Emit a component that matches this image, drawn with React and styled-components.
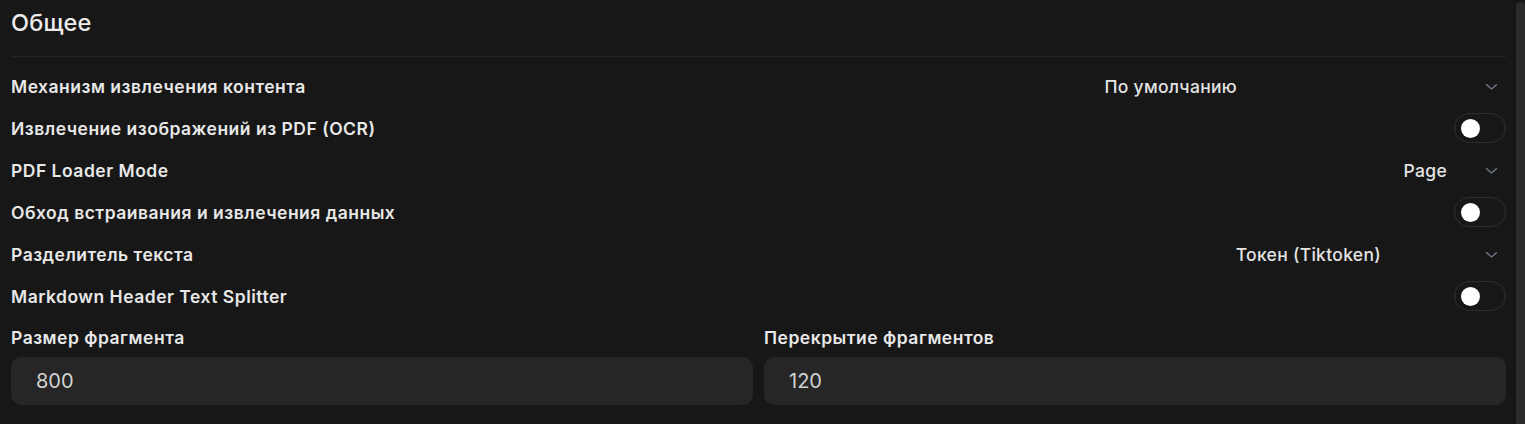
import React from "react";
import styled, { createGlobalStyle } from "styled-components";

const GlobalStyle = createGlobalStyle`
  html, body {
    margin: 0;
    padding: 0;
    background: #171717;
  }
  body {
    font-family: Inter, "Noto Sans", sans-serif;
    color: #e6e6e6;
    -webkit-font-smoothing: antialiased;
  }
`;

const Page = styled.div`
  display: flex;
  height: 424px;
  overflow: hidden;
  background: #171717;
`;

const Content = styled.div`
  flex: 1;
  padding: 0 10px 0 11px;
`;

const Scrollbar = styled.div`
  width: 9px;
  margin-top: 2px;
  background: #2b2b2b;
  border-radius: 5px 5px 0 0;
`;

const Title = styled.h2`
  margin: 0;
  padding-top: 8px;
  height: 30px;
  line-height: 30px;
  font-size: 23.5px;
  font-weight: 500;
  letter-spacing: 0.2px;
  color: #ececec;
`;

const Divider = styled.hr`
  margin: 18px 0 8px;
  border: none;
  border-top: 1px solid #262626;
`;

const Row = styled.div`
  display: flex;
  align-items: center;
  justify-content: space-between;
  height: 42px;
`;

const Label = styled.div`
  font-size: 17.5px;
  font-weight: 600;
  letter-spacing: 0.5px;
  color: #e8e8e8;
`;

const Select = styled.div`
  display: flex;
  align-items: center;
  padding-right: 7px;
  color: #e3e3e3;
  font-size: 17.5px;
  font-weight: 500;
  letter-spacing: 0.3px;
`;

const SelectValue = styled.span`
  padding-right: ${(p) => p.$trail}px;
`;

const Chevron = styled.svg`
  width: 15px;
  height: 15px;
  color: #6b7280;
`;

const Toggle = styled.div`
  box-sizing: border-box;
  width: 52px;
  height: 30px;
  border: 1.5px solid #2e2e2e;
  border-radius: 15px;
  display: flex;
  align-items: center;
  padding-left: 6px;
`;

const Knob = styled.div`
  width: 19px;
  height: 19px;
  border-radius: 50%;
  background: #ffffff;
`;

const Fields = styled.div`
  display: grid;
  grid-template-columns: 1fr 1fr;
  gap: 11px;
  padding-top: 10px;
`;

const Field = styled.div`
  display: flex;
  flex-direction: column;
  gap: 8px;
`;

const FieldLabel = styled(Label)`
  line-height: 22px;
`;

const Input = styled.div`
  height: 48px;
  border-radius: 10px;
  background: #262626;
  display: flex;
  align-items: center;
  padding-left: 25px;
  font-size: 20px;
  color: #d2d2d2;
`;

const ChevronDown = () => (
  <Chevron viewBox="0 0 24 24" fill="none" stroke="currentColor" strokeWidth="2.2" strokeLinecap="round" strokeLinejoin="round">
    <path d="M4 9l8 7 8-7" />
  </Chevron>
);

const rows = [
  { label: "Механизм извлечения контента", type: "select", value: "По умолчанию", trail: 247 },
  { label: "Извлечение изображений из PDF (OCR)", type: "toggle" },
  { label: "PDF Loader Mode", type: "select", value: "Page", trail: 37 },
  { label: "Обход встраивания и извлечения данных", type: "toggle" },
  { label: "Разделитель текста", type: "select", value: "Токен (Tiktoken)", trail: 103 },
  { label: "Markdown Header Text Splitter", type: "toggle" },
];

export default function App() {
  return (
    <>
      <GlobalStyle />
      <Page>
        <Content>
          <Title>Общее</Title>
          <Divider />
          {rows.map((r) => (
            <Row key={r.label}>
              <Label>{r.label}</Label>
              {r.type === "select" ? (
                <Select>
                  <SelectValue $trail={r.trail}>{r.value}</SelectValue>
                  <ChevronDown />
                </Select>
              ) : (
                <Toggle>
                  <Knob />
                </Toggle>
              )}
            </Row>
          ))}
          <Fields>
            <Field>
              <FieldLabel>Размер фрагмента</FieldLabel>
              <Input>800</Input>
            </Field>
            <Field>
              <FieldLabel>Перекрытие фрагментов</FieldLabel>
              <Input>120</Input>
            </Field>
          </Fields>
        </Content>
        <Scrollbar />
      </Page>
    </>
  );
}
